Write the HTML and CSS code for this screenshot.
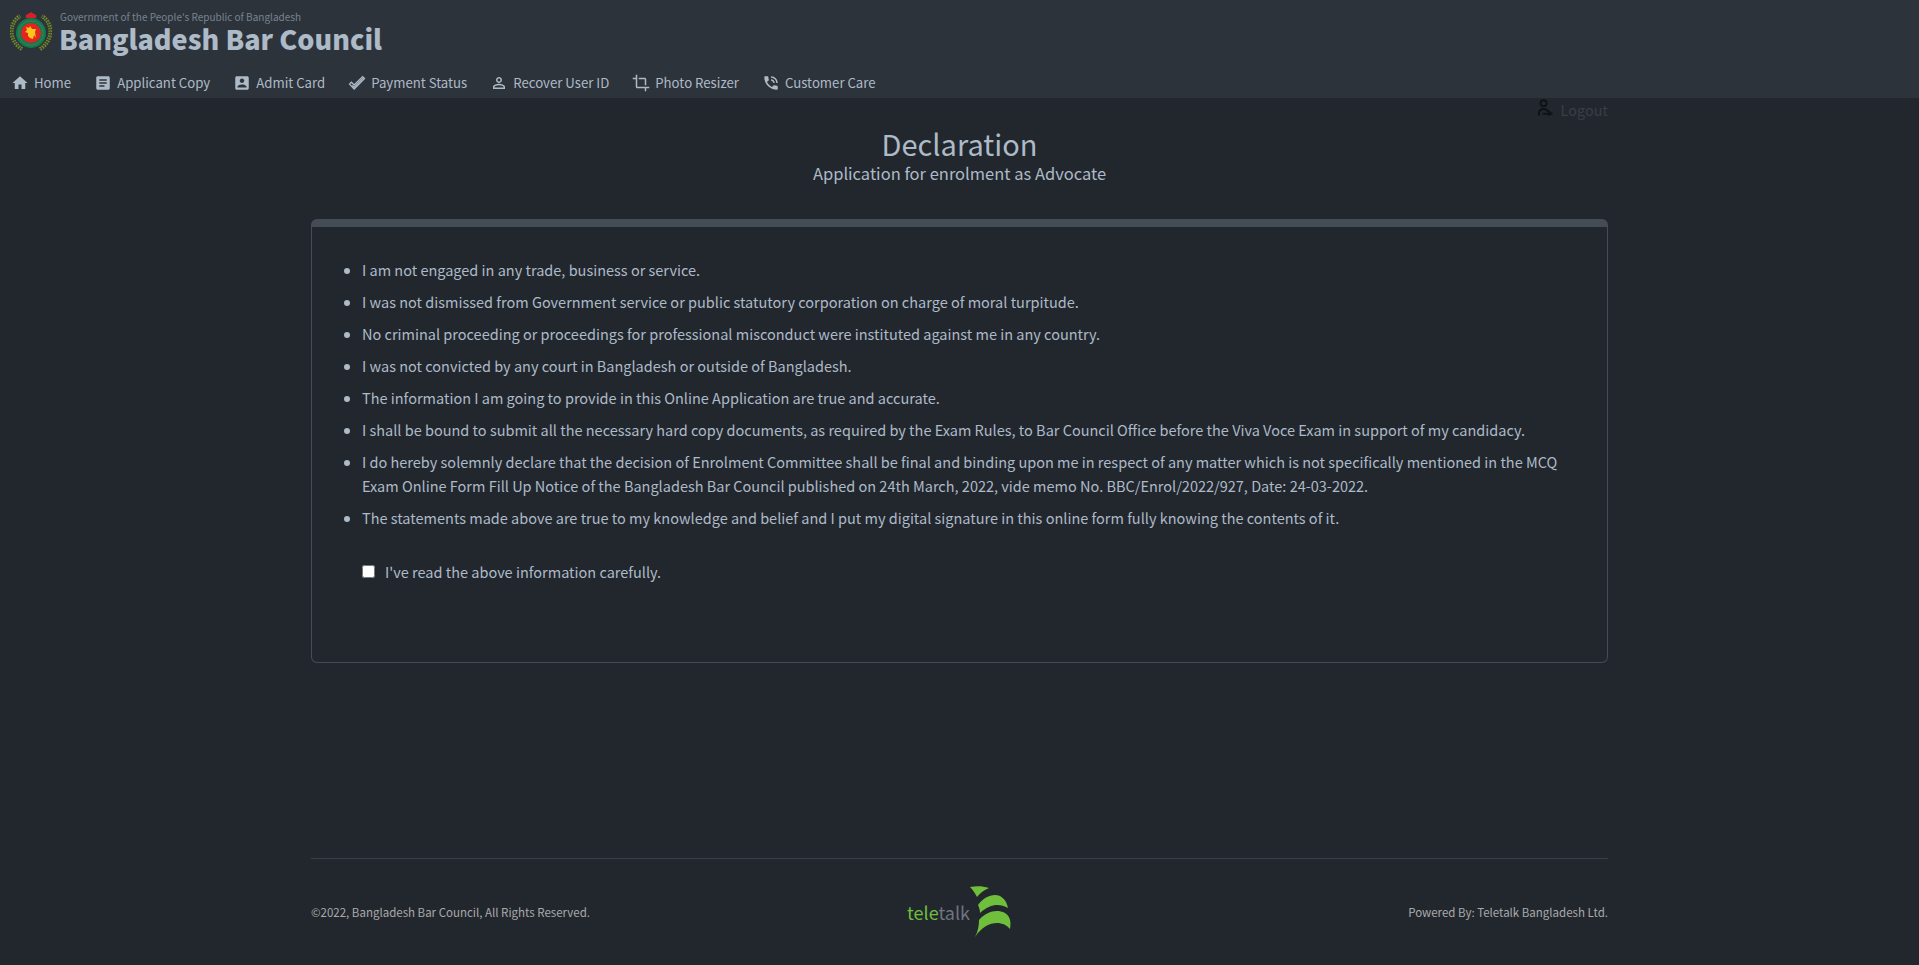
FILE: index.html
```html
<!DOCTYPE html>
<html lang="en">
<head>
<meta charset="utf-8">
<title>Bangladesh Bar Council</title>
<link rel="stylesheet" href="styles.css">
</head>
<body>
<header class="header">
  <div class="brand">
    <svg class="emblem" viewBox="0 0 42 42">
      <g fill="none" stroke="#8b8325" stroke-width="4" stroke-dasharray="1.6 1">
        <path d="M12 38C-1 30-2 13 10 5"/><path d="M30 38c13-8 14-25 2-33"/>
      </g>
      <g fill="none" stroke="#1f6b35" stroke-width="1"><path d="M12 38C-1 30-2 13 10 5"/><path d="M30 38c13-8 14-25 2-33"/></g>
      <path d="M16 7c-1-3 1-4 2-4l3-2 3 2c2 0 3 2 2 4z" fill="#d3202b"/>
      <circle cx="21" cy="22" r="15" fill="#107c4b"/>
      <circle cx="21" cy="22" r="12.2" fill="none" stroke="#53765a" stroke-width="1"/>
      <circle cx="21" cy="22" r="10" fill="#e52420"/>
      <path d="M16 16l3 1 1-2 2 3 4 0-1 3 1 6-2-3-1 4-3-1-2-2 0-3-3-1 2-2z" fill="#f7c51c"/>
    </svg>
    <div class="brand-text">
      <div class="gov">Government of the People's Republic of Bangladesh</div>
      <div class="name">Bangladesh Bar Council</div>
    </div>
  </div>
  <nav class="nav">
    <a class="item home"><svg class="icon" viewBox="0 0 24 24"><path d="M10 20v-6h4v6h5v-8h3L12 3 2 12h3v8z"/></svg><span>Home</span></a>
    <a class="item copy"><svg class="icon" viewBox="0 0 24 24"><path d="M19 3H5c-1.100 0-2 .9-2 2v14c0 1.100.9 2 2 2h14c1.100 0 2-.9 2-2V5c0-1.100-.9-2-2-2zm-5 14H7v-2h7v2zm3-4H7v-2h10v2zm0-4H7V7h10v2z"/></svg><span>Applicant Copy</span></a>
    <a class="item admit"><svg class="icon" viewBox="0 0 24 24"><path d="M3 5v14c0 1.100.89 2 2 2h14c1.100 0 2-.9 2-2V5c0-1.100-.9-2-2-2H5c-1.110 0-2 .9-2 2zm12 4c0 1.660-1.340 3-3 3s-3-1.340-3-3 1.340-3 3-3 3 1.340 3 3zm-9 8c0-2 4-3.100 6-3.100s6 1.100 6 3.100v1H6v-1z"/></svg><span>Admit Card</span></a>
    <a class="item pay"><svg class="icon line" viewBox="0 0 24 24"><path d="M2 13.500l2.500-2.500 3.700 3.700L19.500 3.500 22 6 8.200 20z"/><path d="M5.500 15.500l2.700 2.200L20 5.500"/></svg><span>Payment Status</span></a>
    <a class="item recover"><svg class="icon" viewBox="0 0 24 24"><path d="M12 5.900c1.160 0 2.100.94 2.100 2.100s-.94 2.100-2.100 2.100S9.900 9.160 9.900 8s.94-2.100 2.100-2.100m0 9c2.970 0 6.100 1.460 6.100 2.100v1.100H5.900V17c0-.64 3.130-2.100 6.100-2.100M12 4C9.790 4 8 5.790 8 8s1.790 4 4 4 4-1.790 4-4-1.790-4-4-4zm0 9c-2.670 0-8 1.340-8 4v3h16v-3c0-2.660-5.330-4-8-4z"/></svg><span>Recover User ID</span></a>
    <a class="item photo"><svg class="icon" viewBox="0 0 24 24"><path d="M17 15h2V7c0-1.100-.9-2-2-2H9v2h8v8zM7 17V1H5v4H1v2h4v10c0 1.100.9 2 2 2h10v4h2v-4h4v-2H7z"/></svg><span>Photo Resizer</span></a>
    <a class="item care"><svg class="icon" viewBox="0 0 24 24"><path d="M20 15.500c-1.250 0-2.450-.2-3.570-.57-.1-.03-.21-.05-.31-.05-.26 0-.51.1-.71.290l-2.200 2.200c-2.830-1.440-5.150-3.750-6.590-6.590l2.200-2.210c.28-.26.36-.65.25-1C8.700 6.450 8.500 5.250 8.500 4c0-.55-.45-1-1-1H4c-.55 0-1 .45-1 1 0 9.390 7.610 17 17 17 .55 0 1-.45 1-1v-3.500c0-.55-.45-1-1-1zM19 12h2c0-4.970-4.030-9-9-9v2c3.870 0 7 3.130 7 7zm-4 0h2c0-2.760-2.240-5-5-5v2c1.660 0 3 1.340 3 3z"/></svg><span>Customer Care</span></a>
  </nav>
</header>
<main class="container">
  <div class="logout"><svg class="logout-icon" viewBox="0 0 20 20"><g fill="none" stroke="#0e1116" stroke-width="2"><circle cx="8" cy="5" r="3.200"/><path d="M3 18v-2c0-3 2-5 5-5s4 1 5 3M7 16h9"/></g><path d="M13 12l5 4-5 3z" fill="#0e1116"/></svg><span>Logout</span></div>
  <h1 class="title">Declaration</h1>
  <p class="subtitle"><span>Application for enrolment as Advocate</span></p>
  <section class="card">
    <ul class="list">
      <li>I am not engaged in any trade, business or service.</li>
      <li>I was not dismissed from Government service or public statutory corporation on charge of moral turpitude.</li>
      <li>No criminal proceeding or proceedings for professional misconduct were instituted against me in any country.</li>
      <li>I was not convicted by any court in Bangladesh or outside of Bangladesh.</li>
      <li>The information I am going to provide in this Online Application are true and accurate.</li>
      <li>I shall be bound to submit all the necessary hard copy documents, as required by the Exam Rules, to Bar Council Office before the Viva Voce Exam in support of my candidacy.</li>
      <li>I do hereby solemnly declare that the decision of Enrolment Committee shall be final and binding upon me in respect of any matter which is not specifically mentioned in the MCQ<br>Exam Online Form Fill Up Notice of the Bangladesh Bar Council published on 24th March, 2022, vide memo No. BBC/Enrol/2022/927, Date: 24-03-2022.</li>
      <li>The statements made above are true to my knowledge and belief and I put my digital signature in this online form fully knowing the contents of it.</li>
    </ul>
    <label class="agree"><input class="check" type="checkbox"><span>I've read the above information carefully.</span></label>
  </section>
  <footer class="footer">
    <div>©2022, Bangladesh Bar Council, All Rights Reserved.</div>
    <div class="teletalk"><span class="wordmark"><span class="tele">tele</span>talk</span><svg class="swoosh" viewBox="0 0 42 52"><g fill="#6fbf3c"><path d="M0 1c7-1.500 13-1 19 1C14 4 10 7 7 11 5 7 3 4 0 1z"/><path d="M8 19C14 10 24 7 30 10c5 3 7 7 8 12-9-5-18-4-28 5 0-3-1-6-2-8z"/><path d="M9 34c8-9 18-11 26-7 6 4 6 10 5 16-7-9-24-9-35 8 3-6 4-11 4-17z"/></g></svg></div>
    <div class="powered">Powered By: Teletalk Bangladesh Ltd.</div>
  </footer>
</main>
</body>
</html>
```
FILE: styles.css
```css
* { box-sizing: border-box; }
body {
  margin: 0;
  height: 965px;
  overflow: hidden;
  background: #22272e;
  color: #adbac7;
  font-family: "Noto Sans CJK JP", "Noto Sans CJK SC", sans-serif;
  font-size: 14.500px;
  line-height: 24px;
}
.header { height: 98px; background: #2d333b; }
.brand { display: flex; height: 68px; padding: 11px 0 0 10px; }
.emblem { width: 42px; height: 42px; }
.brand-text { margin-left: 7px; white-space: nowrap; }
.gov { height: 11px; font-size: 10px; line-height: 11px; color: #768390; padding-left: 1px; }
.name { font-size: 27px; font-weight: 900; line-height: 34px; }
.nav { display: flex; height: 30px; padding-left: 11px; align-items: center; font-size: 13.200px; gap: 23px; line-height: 28px; }
.item { display: flex; align-items: center; gap: 5px; white-space: nowrap; }
.icon { width: 18px; height: 18px; fill: currentColor; }
.line { fill: none; stroke: currentColor; stroke-width: 1.800; }
.container { width: 1297px; margin: 0 auto; }
.logout { height: 24px; display: flex; justify-content: flex-end; gap: 6px; color: #373e47; font-size: 14.500px; }
.logout-icon { width: 19px; height: 20px; }
.title { margin: 0; height: 41px; padding-top: 1px; text-align: center; font-size: 29px; font-weight: 400; line-height: 41px; }
.subtitle { margin: 0; height: 56px; text-align: center; font-size: 16.500px; line-height: 20px; }
.card { height: 444px; border: 1px solid #444c56; border-top-width: 8px; border-radius: 6px; padding: 31px 0 0 50px; }
.list { margin: 0; padding: 0; white-space: nowrap; }
.list li { margin-bottom: 8px; }
.agree { display: flex; margin-top: 30px; align-items: flex-start; }
.check { width: 13px; height: 13px; margin: 5px 10px 0 0; }
.footer { margin-top: 195px; border-top: 1px solid #373e47; height: 106px; display: grid; grid-template-columns: 1fr auto 1fr; align-items: center; font-size: 11.500px; color: #aaa; }
.teletalk { display: flex; align-items: center; }
.wordmark { font-family: "Noto Sans CJK JP", sans-serif; font-size: 18px; color: #70757f; }
.tele { color: #6fbf3c; }
.swoosh { width: 42px; height: 52px; }
.powered { text-align: right; }
```
